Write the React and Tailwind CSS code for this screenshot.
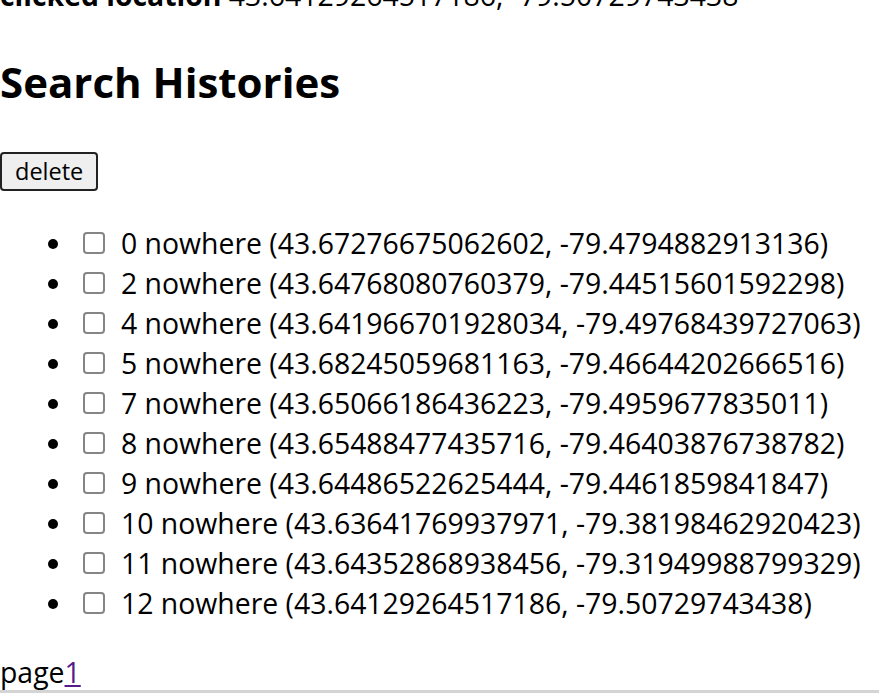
import React from 'react';

const histories = [
  { id: 0, name: 'nowhere', lat: '43.67276675062602', lng: '-79.4794882913136' },
  { id: 2, name: 'nowhere', lat: '43.64768080760379', lng: '-79.44515601592298' },
  { id: 4, name: 'nowhere', lat: '43.641966701928034', lng: '-79.49768439727063' },
  { id: 5, name: 'nowhere', lat: '43.68245059681163', lng: '-79.46644202666516' },
  { id: 7, name: 'nowhere', lat: '43.65066186436223', lng: '-79.4959677835011' },
  { id: 8, name: 'nowhere', lat: '43.65488477435716', lng: '-79.46403876738782' },
  { id: 9, name: 'nowhere', lat: '43.64486522625444', lng: '-79.4461859841847' },
  { id: 10, name: 'nowhere', lat: '43.63641769937971', lng: '-79.38198462920423' },
  { id: 11, name: 'nowhere', lat: '43.64352868938456', lng: '-79.31949988799329' },
  { id: 12, name: 'nowhere', lat: '43.64129264517186', lng: '-79.50729743438' },
];

export default function App() {
  return (
    <div
      className="relative h-[693px] w-[879px] overflow-hidden bg-white text-[28.4px] leading-[40px] text-black"
      style={{ fontFamily: '"Open Sans", "Noto Sans", sans-serif' }}
    >
      <p className="-mt-[25px] whitespace-nowrap">
        <strong className="font-bold">clicked location</strong> 43.64129264517186, -79.50729743438
      </p>

      <h2 className="mt-[37px] text-[42px] font-bold leading-[60px]">Search Histories</h2>

      <div className="mt-[37px] h-[39px]">
        <button className="box-border h-[39px] rounded-[4px] border-2 border-[#222] bg-[#efefef] px-[13px] text-[23.5px] leading-none">
          delete
        </button>
      </div>

      <ul className="mt-[35px] list-disc pl-[75px]">
        {histories.map((h) => (
          <li key={h.id} className="h-[40px] whitespace-nowrap pl-[8px]">
            <span className="inline-flex items-center gap-[16px]">
              <span className="inline-block h-[22px] w-[22px] rounded-[4px] border-2 border-[#858585] bg-white" />
              <span>
                {h.id} {h.name} ({h.lat}, {h.lng})
              </span>
            </span>
          </li>
        ))}
      </ul>

      <p className="mt-[29px]">
        page
        <a href="#" className="text-[#551a8b] underline decoration-2 underline-offset-2">
          1
        </a>
      </p>

      <div className="absolute bottom-0 left-0 h-[3px] w-full bg-[#d4d4d4]" />
    </div>
  );
}
